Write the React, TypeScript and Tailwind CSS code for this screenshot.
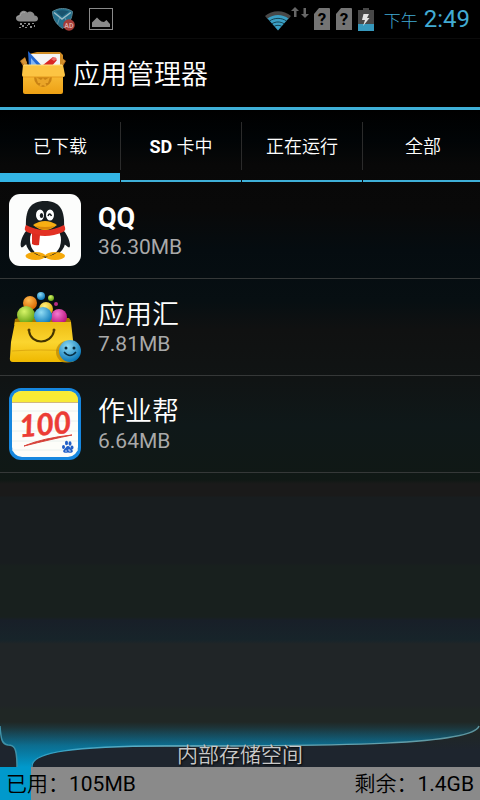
import React, { useState } from 'react';

function RainIcon() {
  return (
    <svg width="22" height="19" viewBox="0 0 22 19" aria-hidden="true">
      <path d="M4 11.5C1.5 11.5 0 10 0 8.2 0 6.3 1.6 5 3.3 5.2 3.6 2.2 5.8.6 8 .8c1.4.1 2.4.7 3.2 1.8C12.300 1.600 14.600 1.200 16.400 2.200c1.400.8 2 2 2.100 3.300C20.600 5.600 22 7 22 8.700c0 1.600-1.300 2.800-3.200 2.800z" fill="#8b8b8b" />
      <path d="M1 7.500C2 5.500 4 6 4 6 4.500 3 7 1.800 9 2.600" fill="none" stroke="#a5a5a5" />
      <g fill="#8d8d8d">
        <rect x="4" y="13" width="2" height="2" /><rect x="8" y="13" width="2" height="1" />
        <rect x="12" y="13" width="2" height="2" /><rect x="16" y="13" width="2" height="1" />
        <rect x="3" y="17" width="2" height="1" /><rect x="6" y="15" width="2" height="2" />
        <rect x="9" y="17" width="2" height="1" /><rect x="11" y="15" width="1" height="1" />
        <rect x="14" y="16" width="2" height="2" /><rect x="18" y="15" width="1" height="2" />
      </g>
    </svg>
  );
}

function ShieldIcon() {
  return (
    <svg width="23" height="23" viewBox="0 0 23 23" aria-hidden="true">
      <path d="M.5 3.500C5 1 8 .5 10.500.5S17 1 20.500 3.500C20 11 17 16 10.500 20.500 4 16 .8 11 .5 3.500z" fill="#226f8c" stroke="#56818f" />
      <path d="M4 3.500 10 8.500 17 3.500C12 1.800 8 1.800 4 3.500z" fill="#19536e" />
      <path d="M2 4.500 10 11 18.800 4.500" fill="none" stroke="#9dbcc7" strokeWidth="1.500" />
      <path d="M7.500 10 5.500 16M13 10 14.500 13" stroke="#6796a8" fill="none" />
      <circle cx="17" cy="17" r="5.800" fill="#a53c38" />
      <text x="17" y="20" textAnchor="middle" fontSize="7" fontWeight="700" fill="#d9a9a5">AD</text>
    </svg>
  );
}

function PictureIcon() {
  return (
    <svg width="24" height="22" viewBox="0 0 24 22" aria-hidden="true">
      <rect x=".5" y=".5" width="23" height="21" fill="none" stroke="#8a8a8a" />
      <path d="M3 19V14.500L5 12.500 8 9.500 10.500 12 12.500 13.500 15 14 17.500 12 20 15 21 16V19z" fill="#8a8a8a" />
    </svg>
  );
}

function WifiIcon() {
  return (
    <svg width="26" height="20" viewBox="0 0 26 20" aria-hidden="true">
      <path d="M0 5C7-1.500 19-1.500 26 5L23 8.500C17 3.500 9 3.500 3 8.500z" fill="#484848" />
      <path d="M2.500 7.500C8.500 2.800 17.500 2.800 23.500 7.500L13 19.500z" fill="#3a9fc4" />
      <path d="M4.500 10C9.500 6.500 16.500 6.500 21.500 10M7 12.700C10.500 10.400 15.500 10.400 19 12.700M9.200 15.300C11.500 14 14.500 14 16.800 15.300" fill="none" stroke="#0d2934" strokeWidth=".8" />
    </svg>
  );
}

function TrafficIcon() {
  return (
    <svg width="18" height="11" viewBox="0 0 18 11" aria-hidden="true">
      <path d="M4 0 8 4H5.500V10H3V4H0zM14 11 10 7H12.500V1H15V7H18z" fill="#666" />
    </svg>
  );
}

function SimIcon() {
  return (
    <svg width="16" height="22" viewBox="0 0 16 22" aria-hidden="true">
      <path d="M0 22V6L5 0H15Q16 0 16 1V22z" fill="#747474" />
      <text x="8" y="17" textAnchor="middle" fontSize="17" fontWeight="700" fill="#000">?</text>
    </svg>
  );
}

function BatteryIcon() {
  return (
    <svg width="16" height="23" viewBox="0 0 16 23" aria-hidden="true">
      <path d="M0 2H5V0H11V2H16V16H0z" fill="#484848" />
      <rect y="16" width="16" height="7" fill="#3798bc" />
      <path d="M5.500 6H11L9 10H11.500L5 18 7 12H4z" fill="#e4e4e4" />
    </svg>
  );
}

function BoxIcon() {
  return (
    <svg width="46" height="44" viewBox="0 0 46 44" aria-hidden="true">
      <defs>
        <linearGradient id="box" x1="0" y1="0" x2="0" y2="1">
          <stop offset="0" stopColor="#fdc744" /><stop offset="1" stopColor="#eda014" />
        </linearGradient>
      </defs>
      <path d="M0 10 5 6 8 15H3zM46 10 41 6 37 15H43z" fill="#b8731d" />
      <path d="M1 10 5 7 7 12 4 14zM45 10 41 7 38 12 42 14z" fill="#d79537" />
      <path d="M9 3 17 1H40L43 4V16H9z" fill="#d08c25" />
      <path d="M11 3H40V20H10z" fill="#f4f4f4" />
      <path d="M23 14 33 6 37 9 31 16z" fill="#d92624" />
      <path d="M31 8 35 6 37 8 34 10z" fill="#ef706c" />
      <path d="M8 0 24 17H9z" fill="#2468d1" />
      <path d="M11 7 17 14H11z" fill="#82b5f4" />
      <path d="M3 15H43V41Q43 43 41 43H5Q3 43 3 41z" fill="url(#box)" />
      <path d="M14 26A9 10 0 0 0 32 26z" fill="#c98214" />
      <path d="M16 26 21 29 23 27 25 29 30 26 28 32 25.500 32 27 36 23 34 19 36 20.500 32 18 32z" fill="#eaa528" />
      <path d="M3 14H43L45 24Q45 26 43 26H4Q2 26 2 24z" fill="#fcc443" />
      <path d="M3 26H43" stroke="#e59a1c" /><path d="M4 14H42" stroke="#ffe082" />
    </svg>
  );
}

function PenguinIcon() {
  return (
    <svg width="72" height="72" viewBox="0 0 72 72" aria-hidden="true">
      <rect width="72" height="72" rx="11" fill="#fcfdfc" />
      <path d="M18 36C11 43 10 56 14 53L22 46zM54 36C61 43 63 56 59 53L50 46z" fill="#161c20" />
      <ellipse cx="36.500" cy="46" rx="20" ry="18" fill="#161c20" />
      <ellipse cx="36.500" cy="46" rx="15.500" ry="17" fill="#fff" />
      <ellipse cx="26.500" cy="62" rx="10" ry="4" fill="#f5a90b" />
      <ellipse cx="46" cy="62" rx="10" ry="4" fill="#f5a90b" />
      <path d="M23 58Q36 67 49 58L44 60Q36 66 28 60z" fill="#161c20" />
      <path d="M17 34C16 16 21 7 36 7S56 16 55 34Q36 44 17 34z" fill="#171d20" />
      <path d="M17 31Q36 41 55 31 58 36 54 38 36 46 18 38 14 36 17 31z" fill="#e33124" />
      <path d="M23 39 31 41 30 51Q26 52 23 50z" fill="#dc2c20" />
      <ellipse cx="31" cy="21" rx="4" ry="5.500" fill="#fff" />
      <ellipse cx="41" cy="21" rx="4" ry="5.500" fill="#fff" />
      <ellipse cx="32.500" cy="21.500" rx="1.700" ry="2.500" fill="#171d20" />
      <path d="M39 22Q40.500 18 42.500 22" fill="none" stroke="#171d20" strokeWidth="1.500" />
      <path d="M24 31Q30 27 36 27T48 31Q42 36 36 36T24 31z" fill="#f7af13" />
      <path d="M26 32Q36 34 46 32 41 35.500 36 35.500T26 32z" fill="#d98708" />
    </svg>
  );
}

function BagIcon() {
  const balls = [
    { x: 21, y: 12, r: 7, fill: 'url(#orange)' },
    { x: 37, y: 18, r: 7, fill: 'url(#yellow)' },
    { x: 32, y: 5, r: 4, fill: 'url(#blue)' },
    { x: 42, y: 7, r: 3, fill: 'url(#green)' },
    { x: 47, y: 13, r: 2, fill: '#b82c84' },
    { x: 17, y: 24, r: 9, fill: 'url(#green)' },
    { x: 50, y: 26, r: 8, fill: 'url(#pink)' },
    { x: 34, y: 25, r: 9, fill: 'url(#blue)' },
  ];
  const tones = [
    ['orange', '#ffbd52', '#d96700'], ['yellow', '#fff184', '#e0ab00'], ['blue', '#91dcf4', '#0876b8'],
    ['green', '#d8f568', '#629f13'], ['pink', '#f57bd0', '#b70d7a'],
  ];
  return (
    <svg width="72" height="72" viewBox="0 0 72 72" aria-hidden="true">
      <defs>
        {tones.map(([id, light, dark]) => (
          <radialGradient id={id} key={id} cx=".4" cy=".3" r=".7">
            <stop stopColor={light} /><stop offset="1" stopColor={dark} />
          </radialGradient>
        ))}
        <linearGradient id="bag" x1="0" y1="0" x2="0" y2="1">
          <stop stopColor="#eebc13" /><stop offset=".5" stopColor="#fbd52f" /><stop offset="1" stopColor="#efb800" />
        </linearGradient>
      </defs>
      <path d="M6 28 9 27H60L62 30V34H5z" fill="#a77700" />
      {balls.map((b, i) => <circle key={i} cx={b.x} cy={b.y} r={b.r} fill={b.fill} />)}
      <path d="M6 31H62L66 67Q66 71 62 71H4Q0 71 1 66L2 51z" fill="url(#bag)" />
      <path d="M3 60Q30 58 64 60" stroke="#dfab10" fill="none" />
      <path d="M20 40C22 54 42 54 45 40" fill="none" stroke="#423300" strokeWidth="2" />
      <circle cx="20" cy="39" r="1.500" fill="#513b00" /><circle cx="45" cy="39" r="1.500" fill="#513b00" />
      <circle cx="58" cy="61" r="11" fill="#ae7a00" opacity=".6" />
      <circle cx="61" cy="60" r="11" fill="url(#blue)" />
      <circle cx="57" cy="57" r="1.500" fill="#082b3d" /><circle cx="65" cy="57" r="1.500" fill="#082b3d" />
      <path d="M55 61Q61 68 67 61" fill="none" stroke="#073047" strokeWidth="1.500" />
    </svg>
  );
}

function HomeworkIcon() {
  return (
    <svg width="72" height="72" viewBox="0 0 72 72" aria-hidden="true">
      <rect width="72" height="72" rx="12" fill="#1687df" />
      <rect x="3" y="3" width="66" height="66" rx="10" fill="#fdfdf9" />
      <path d="M3 15V13Q3 3 13 3H59Q69 3 69 13V15z" fill="#f8eb35" />
      <path d="M3 14.500H69" stroke="#d2b87d" />
      <path d="M3 23H69M3 33H69M3 43H69M3 53H69M3 62H69" stroke="#eaf1ee" />
      <text x="36" y="47" textAnchor="middle" fontFamily="Lato, sans-serif" fontSize="30" fontWeight="700" fontStyle="italic" fill="#ec3c35" stroke="#ec3c35" strokeWidth=".5" transform="rotate(-5 36 36)">100</text>
      <path d="M15 58Q34 50 63 47 43 51 15 58z" fill="#c93630" stroke="#d9443b" />
      <g fill="#205fc7">
        <ellipse cx="54.500" cy="59" rx="1.500" ry="2" /><ellipse cx="57.500" cy="55" rx="1.500" ry="2.300" />
        <ellipse cx="61" cy="55.500" rx="1.500" ry="2.300" /><ellipse cx="63" cy="59.500" rx="1.500" ry="2" />
        <path d="M59 58C57 58 57 60 55 61.500 53 64 55 65.500 59 64.500 63 65.500 65 64 63 61.500 61 60 61 58 59 58z" />
      </g>
      <path d="M57 62V64M60 61V63H62" stroke="#fff" strokeWidth=".7" fill="none" />
    </svg>
  );
}

function StorageGlow() {
  return (
    <svg className="block h-[45px] w-full" viewBox="0 0 480 45" preserveAspectRatio="none" aria-hidden="true">
      <defs>
        <linearGradient id="glow" x1="0" y1="0" x2="0" y2="45" gradientUnits="userSpaceOnUse">
          <stop offset="0" stopColor="#0b7ea6" stopOpacity="0" />
          <stop offset=".12" stopColor="#0b7ea6" stopOpacity=".15" />
          <stop offset=".52" stopColor="#087fa8" stopOpacity=".8" />
          <stop offset="1" stopColor="#0099cc" />
        </linearGradient>
        <linearGradient id="edge" x1="32" y1="0" x2="479" y2="0" gradientUnits="userSpaceOnUse">
          <stop offset="0" stopColor="#2f9fc4" /><stop offset=".35" stopColor="#6fb4c4" /><stop offset="1" stopColor="#5c949e" />
        </linearGradient>
      </defs>
      <path d="M0 0V6C1 18 2 22 8 23 14 23 17 25 17 45H31C31 30 75 24 165 24 340 24 473 23 479 4V0z" fill="url(#glow)" />
      <path d="M32 45C30 30 75 24 165 24 340 24 473 23 479 4" fill="none" stroke="url(#edge)" strokeWidth="1.500" />
      <path d="M0 4C1 18 2 22 8 23 14 23 17 25 17 45" fill="none" stroke="#3f91a8" strokeWidth="1.500" />
    </svg>
  );
}

const tabs = [
  { prefix: '', label: '已下载' },
  { prefix: 'SD', label: ' 卡中' },
  { prefix: '', label: '正在运行' },
  { prefix: '', label: '全部' },
];

const apps = [
  { name: 'QQ', size: '36.30MB', Icon: PenguinIcon },
  { name: '应用汇', size: '7.81MB', Icon: BagIcon },
  { name: '作业帮', size: '6.64MB', Icon: HomeworkIcon },
];

function StatusBar() {
  return (
    <div className="flex h-[39px] items-center justify-between border-b border-[#0b0b0b] pl-4 pr-[10px]">
      <div className="flex items-center gap-[14px]">
        <RainIcon />
        <ShieldIcon />
        <PictureIcon />
      </div>
      <div className="flex items-center">
        <div className="flex items-start">
          <div className="pt-1"><WifiIcon /></div>
          <TrafficIcon />
        </div>
        <div className="flex items-center gap-[6px] pl-[5px]">
          <SimIcon />
          <SimIcon />
          <BatteryIcon />
        </div>
        <div className="flex items-baseline gap-[6px] pl-[10px] text-[#42abd3]">
          <span className="text-[17px] font-light">下午</span>
          <span className="text-2xl">2:49</span>
        </div>
      </div>
    </div>
  );
}

export default function App() {
  const [active, setActive] = useState(0);
  return (
    <div className="flex min-h-screen flex-col bg-[linear-gradient(to_bottom,#000_0,#000_110px,#010406_140px,#080808_165px,#090909_210px,#050c10_250px,#070f12_300px,#101111_330px,#101414_380px,#0f1819_425px,#101815_480px,#1a1a1a_484px,#1a1a1a_496px,#181d1f_497px,#181d1f_563px,#18201e_566px,#18201e_617px,#181f28_620px,#17242a_640px,#202527_644px,#202527_706px,#202725_710px,#202725_730px,#1e252e_750px)] font-[Roboto,'Noto_Sans_CJK_SC',sans-serif] text-white">
      <StatusBar />
      <header className="flex h-[71px] items-center gap-[7px] border-b-[3px] border-[#3fb0d8] pl-5">
        <BoxIcon />
        <h1 className="pt-1 text-[27px] font-[350]">应用管理器</h1>
      </header>
      <nav className="flex h-[72px] overflow-hidden">
        {tabs.map(({ prefix, label }, i) => (
          <React.Fragment key={label}>
            {i > 0 && <div className="mt-3 h-12 w-px shrink-0 bg-[#2b2b2b]" />}
            <button
              type="button"
              aria-pressed={active === i}
              onClick={() => setActive(i)}
              className={
                active === i
                  ? 'relative flex w-1/4 shrink-0 items-center justify-center pt-[2px] text-lg font-[350] after:absolute after:inset-x-0 after:bottom-0 after:h-[9px] after:bg-[#33b5e5]'
                  : 'relative flex w-1/4 shrink-0 items-center justify-center pt-[2px] text-lg font-[350] after:absolute after:inset-x-0 after:bottom-0 after:h-[2px] after:bg-[#3fb0d8]'
              }
            >
              <span><b className="font-bold">{prefix}</b>{label}</span>
            </button>
          </React.Fragment>
        ))}
      </nav>
      <main className="flex-1">
        <ul>
          {apps.map(({ name, size, Icon }) => (
            <li key={name} className="border-b border-[#353838]">
              <button type="button" className="flex h-24 w-full items-center gap-[17px] pl-[9px] text-left">
                <Icon />
                <span className="flex flex-col pt-[2px]">
                  <span className={name === 'QQ' ? 'text-[27px] leading-8 font-bold' : 'text-[27px] leading-8 font-[350]'}>{name}</span>
                  <span className="text-[21px] leading-[26px] text-[#a9a9a9]">{size}</span>
                </span>
              </button>
            </li>
          ))}
        </ul>
      </main>
      <footer>
        <div className="relative">
          <StorageGlow />
          <div className="absolute inset-x-0 bottom-0 text-center text-[21px] leading-[24px] font-[350] text-[#c8c8c8] [text-shadow:1px_1px_2px_#000]">内部存储空间</div>
        </div>
        <div className="flex h-[33px] items-center justify-between bg-[linear-gradient(to_right,#0099cc_31px,#8a8a8a_31px)] pl-[6px] pr-[6px] pt-[2px] text-[21px] text-black">
          <span><span className="font-[350]">已用：</span>105MB</span>
          <span><span className="font-[350]">剩余：</span>1.4GB</span>
        </div>
      </footer>
    </div>
  );
}
